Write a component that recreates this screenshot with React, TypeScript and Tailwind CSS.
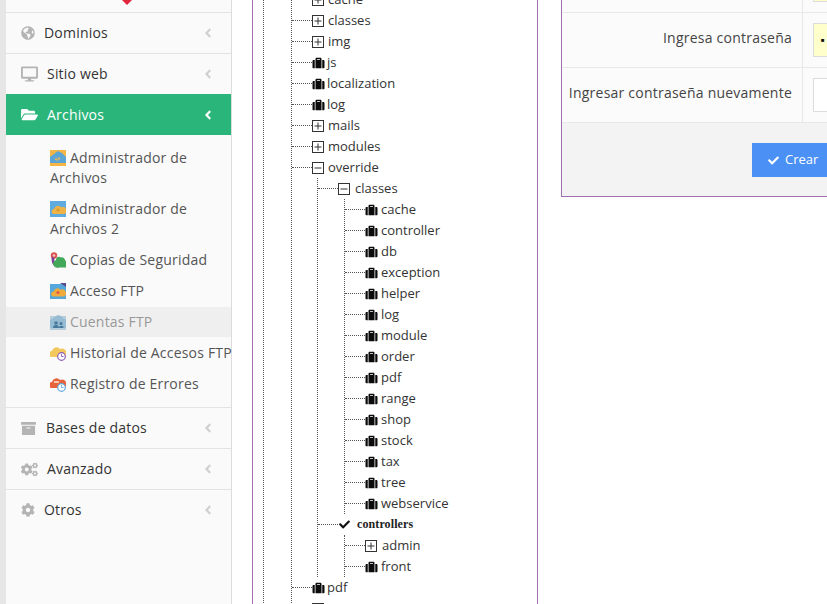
import React from "react";
import { FaGlobeAmericas, FaDesktop, FaFolderOpen, FaArchive, FaCogs, FaCog, FaAngleLeft, FaCheck, FaSuitcase } from "react-icons/fa";

function Cloud({ color, x = 0, y = 0, s = 1 }: { color: string; x?: number; y?: number; s?: number }) {
  return (
    <g transform={`translate(${x} ${y}) scale(${s})`}>
      <path d="M2 13 a3 3 0 0 1 0-6 a4.5 4.5 0 0 1 8-2 a3.5 3.5 0 0 1 4 8 z" fill={color} />
    </g>
  );
}

function Clock({ color, cx, cy }: { color: string; cx: number; cy: number }) {
  return (
    <g>
      <circle cx={cx} cy={cy} r="3.8" fill="#fff" stroke={color} strokeWidth="1.2" />
      <path d={`M${cx} ${cy - 2.4} V${cy} H${cx + 2}`} stroke={color} strokeWidth="0.9" fill="none" />
    </g>
  );
}

function SubIcon({ kind }: { kind: number }) {
  const cls = "inline-block align-[-3px] mr-[4px] w-[16px] h-[16px]";
  return (
    <svg viewBox="0 0 16 16" className={cls}>
      {kind === 0 && (
        <>
          <rect x="0" y="0" width="16" height="16" fill="#f3b646" />
          <path d="M0 13 V7 L8 1 L12 3 L16 7 V13 Z" fill="#5aa5d5" />
          <path d="M5 9 h5 l-1.5 -2 M5 9 l3 1.5" stroke="#f3b646" strokeWidth="1" fill="none" />
        </>
      )}
      {kind === 1 && (
        <>
          <rect x="0" y="0" width="16" height="16" fill="#5fabdf" />
          <Cloud color="#efb244" x={2.5} y={2} s={0.85} />
          <circle cx="8" cy="9" r="1.6" fill="#d99a30" />
        </>
      )}
      {kind === 2 && (
        <>
          <circle cx="4" cy="3.5" r="3.2" fill="#d9534f" />
          <circle cx="4" cy="3.5" r="1.2" fill="#f4c9c9" />
          <path d="M1.5 5 C1.5 13 4 15 9 15.5 L7 13 C4.5 12 4 9 4.5 6 Z" fill="#7a3d9a" />
          <path d="M6 8 a3 3 0 0 1 5 -2.5 a3 3 0 0 1 4 3 a3.5 3.5 0 0 1 -1 7 H8.5 a3.8 3.8 0 0 1 -2.5 -7.5 z" fill="#43a85a" />
        </>
      )}
      {kind === 3 && (
        <>
          <rect x="0" y="1" width="16" height="15" fill="#55a7dc" />
          <path d="M10 0 L16 4 V0 Z" fill="#5b4a8e" />
          <Cloud color="#f0ab3a" x={2} y={2.5} s={0.85} />
          <circle cx="8" cy="9.5" r="1.6" fill="#e2574c" />
        </>
      )}
      {kind === 4 && (
        <>
          <rect x="0" y="2" width="16" height="14" fill="#a9c6d8" />
          <path d="M0 6 L8 1 L11 2 L14 5 H16 V14 H0 Z" fill="#7fb0cc" />
          <circle cx="6" cy="9" r="1.8" fill="#1f5c85" />
          <path d="M3 14 a3 3 0 0 1 6 0 Z" fill="#1f5c85" />
          <circle cx="11" cy="9.5" r="1.5" fill="#1f5c85" />
          <path d="M9 14 a2.3 2.3 0 0 1 4.6 0 Z" fill="#1f5c85" />
        </>
      )}
      {kind === 5 && (
        <>
          <Cloud color="#f2c75c" x={0} y={-1} />
          <Clock color="#8e5bb5" cx={11.5} cy={11.5} />
        </>
      )}
      {kind === 6 && (
        <>
          <Cloud color="#e8623c" x={0} y={-1} />
          <rect x="4" y="5" width="5" height="2" fill="#f7c5a8" />
          <Clock color="#5fa8dc" cx={11.5} cy={11.5} />
        </>
      )}
    </svg>
  );
}

const mainTop = [
  { label: "Dominios", icon: <FaGlobeAmericas className="w-[14px] h-[14px]" />, gap: "ml-[9px]" },
  { label: "Sitio web", icon: <FaDesktop className="w-[17px] h-[16px]" />, gap: "ml-[9px]" },
];
const mainBottom = [
  { label: "Bases de datos", icon: <FaArchive className="w-[15px] h-[15px]" />, gap: "ml-[10px]", border: true },
  { label: "Avanzado", icon: <FaCogs className="w-[17px] h-[15px]" />, gap: "ml-[9px]", border: true },
  { label: "Otros", icon: <FaCog className="w-[14px] h-[14px]" />, gap: "ml-[9px]", border: false },
];
const subItems = [
  "Administrador de Archivos",
  "Administrador de Archivos 2",
  "Copias de Seguridad",
  "Acceso FTP",
  "Cuentas FTP",
  "Historial de Accesos FTP",
  "Registro de Errores",
];

function MainRow({ label, icon, gap, border = true }: { label: string; icon: React.ReactNode; gap: string; border?: boolean }) {
  return (
    <div className={`flex items-center h-[41px] pl-[15px] pr-[17px] text-[#333] ${border ? "border-b border-[#e3e3e3]" : "pb-[2px]"}`}>
      <span className="text-[#b4b4b4] flex items-center">{icon}</span>
      <span className={`${gap} flex-1 -mt-px`}>{label}</span>
      <FaAngleLeft className="w-[12px] h-[14px] text-[#d0d0d0]" />
    </div>
  );
}

function Sidebar() {
  return (
    <aside className="w-[226px] shrink-0 ml-[6px] h-full bg-[#fafafa] border-r border-[#dcdcdc] text-[14px] tracking-[0.2px]">
      <div className="h-[13px] border-b border-[#e3e3e3] flex justify-center">
        <svg viewBox="0 0 12 5" className="w-[12px] h-[5px] ml-[17px]">
          <path d="M1 0 H11 L6 5 Z" fill="#e0253a" />
        </svg>
      </div>
      {mainTop.map((m) => (
        <MainRow key={m.label} {...m} />
      ))}
      <div className="flex items-center h-[41px] -mt-px pl-[15px] pr-[17px] bg-[#2ab57a] text-white">
        <FaFolderOpen className="w-[17px] h-[15px]" />
        <span className="ml-[9px] flex-1">Archivos</span>
        <FaAngleLeft className="w-[12px] h-[14px]" />
      </div>
      <div className="pt-[8px] pb-[7px] border-b border-[#e3e3e3]">
        {subItems.map((s, i) => (
          <div
            key={s}
            className={`pl-[44px] py-[5px] mb-px leading-[20px] ${i === 5 ? "whitespace-nowrap" : ""} ${i === 4 ? "bg-[#efefef] text-[#999]" : "text-[#555]"}`}
          >
            <span className={i === 4 ? "opacity-80" : ""}>
              <SubIcon kind={i} />
            </span>
            {s}
          </div>
        ))}
      </div>
      {mainBottom.map((m) => (
        <MainRow key={m.label} {...m} />
      ))}
    </aside>
  );
}

type Node = { n: string; c?: Node[]; open?: boolean; check?: boolean };

const leaf = (n: string): Node => ({ n });
const tree: Node[] = [
  { n: "cache", c: [] },
  { n: "classes", c: [] },
  { n: "img", c: [] },
  leaf("js"),
  leaf("localization"),
  leaf("log"),
  { n: "mails", c: [] },
  { n: "modules", c: [] },
  {
    n: "override",
    open: true,
    c: [
      {
        n: "classes",
        open: true,
        c: ["cache", "controller", "db", "exception", "helper", "log", "module", "order", "pdf", "range", "shop", "stock", "tax", "tree", "webservice"].map(leaf),
      },
      { n: "controllers", check: true, open: true, c: [{ n: "admin", c: [] }, leaf("front")] },
    ],
  },
  leaf("pdf"),
  { n: "", c: [] },
];

function Box({ open }: { open: boolean }) {
  return (
    <svg viewBox="0 0 12 12" className="w-[12px] h-[12px] shrink-0">
      <rect x="0.5" y="0.5" width="11" height="11" fill="#fff" stroke="#333" />
      <path d="M2.5 6 H9.5" stroke="#333" />
      {!open && <path d="M6 2.5 V9.5" stroke="#333" />}
    </svg>
  );
}

function TreeList({ nodes, depth }: { nodes: Node[]; depth: number }) {
  const indent = depth === 0 ? "" : depth === 1 ? "ml-[25px]" : "ml-[26px]";
  const boxGap = depth === 0 ? "ml-[4px]" : "ml-[5px]";
  const leafGap = depth === 0 ? "ml-[2px]" : "ml-[3px]";
  return (
    <ul className={`border-l border-dotted border-[#555] ${indent}`}>
      {nodes.map((node) => (
        <li key={node.n}>
          <div className="flex items-center h-[21px]">
            <span className="w-[20px] shrink-0 border-t border-dotted border-[#555]" />
            {node.check ? (
              <>
                <FaCheck className="w-[13px] h-[11px] text-[#111] shrink-0" />
                <span className="ml-[6px] -mt-[2px] font-['Liberation_Serif',serif] font-bold text-[12px] text-[#222] tracking-[0.1px]">{node.n}</span>
              </>
            ) : node.c ? (
              <>
                <Box open={!!node.open} />
                <span className={boxGap}>{node.n}</span>
              </>
            ) : (
              <>
                <FaSuitcase className="w-[13px] h-[12px] text-[#0b0b0b] shrink-0" />
                <span className={leafGap}>{node.n}</span>
              </>
            )}
          </div>
          {node.c && node.open && <TreeList nodes={node.c} depth={depth + 1} />}
        </li>
      ))}
    </ul>
  );
}

function TreePanel() {
  return (
    <section className="w-[286px] shrink-0 h-full overflow-hidden bg-white border-x border-[#a06fb0] text-[13px] text-[#333]">
      <div className="ml-[10px] -mt-[11px] border-l border-dotted border-[#555] pl-[27px]">
        <TreeList nodes={tree} depth={0} />
      </div>
    </section>
  );
}

function FormRow({ label, filled, dot }: { label: string; filled: boolean; dot?: boolean }) {
  return (
    <div className="flex h-[55px] border-b border-[#e8e8e8] bg-[#fbfbfb] text-[14px] text-[#444] tracking-[0.23px]">
      <div className="w-[241px] shrink-0 flex items-center justify-end pr-[10px] pb-[6px] border-r border-[#e8e8e8]">{label}</div>
      <div className="pl-[10px] py-[10px]">
        <div className={`w-[120px] h-[34px] border border-[#dcdcdc] flex items-center pl-[7px] text-[#111] leading-none ${filled ? "bg-[#ffffcc]" : "bg-white"}`}>
          {dot ? <span className="text-[6px]">■</span> : null}
        </div>
      </div>
    </div>
  );
}

function FormPanel() {
  return (
    <section className="w-[400px] shrink-0 self-start -mt-[42px] ml-[23px] border-l border-b border-[#a06fb0] bg-white">
      <FormRow label="" filled={true} />
      <FormRow label="Ingresa contraseña" filled={true} dot />
      <FormRow label="Ingresar contraseña nuevamente" filled={false} />
      <div className="h-[73px] bg-[#f3f3f3] pl-[190px] pt-[20px]">
        <button className="w-[120px] h-[34px] bg-[#4a90f5] text-white text-[13px] flex items-center pl-[15px]">
          <FaCheck className="w-[13px] h-[11px]" />
          <span className="ml-[5px]">Crear</span>
        </button>
      </div>
    </section>
  );
}

export default function App() {
  return (
    <div className="w-[827px] h-[604px] overflow-hidden flex bg-[#e6e6e6] font-['Open_Sans',sans-serif]">
      <Sidebar />
      <main className="flex-1 h-full overflow-hidden flex bg-white pl-[20px]">
        <TreePanel />
        <FormPanel />
      </main>
    </div>
  );
}
